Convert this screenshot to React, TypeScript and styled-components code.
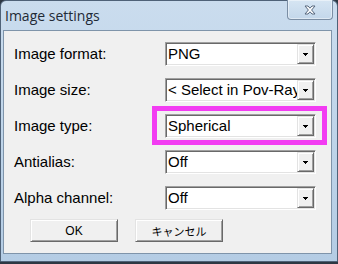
import React from 'react';
import styled, { createGlobalStyle } from 'styled-components';

type Setting = {
    label: string,
    value: string,
    highlighted?: boolean,
}

const settings: Setting[] = [
    { label: 'Image format:', value: 'PNG' },
    { label: 'Image size:', value: '< Select in Pov-Ray >' },
    { label: 'Image type:', value: 'Spherical', highlighted: true },
    { label: 'Antialias:', value: 'Off' },
    { label: 'Alpha channel:', value: 'Off' },
];

const GlobalStyle = createGlobalStyle`
    html, body {
        margin: 0;
        padding: 0;
    }
    body {
        width: 338px;
        height: 264px;
        overflow: hidden;
        background: #2d3743;
        font-family: "Liberation Sans", Arial, sans-serif;
    }
`;

const Window = styled.div`
    box-sizing: border-box;
    width: 338px;
    height: 262px;
    border: 1px solid #4f6278;
    border-radius: 6px 6px 0 0;
    background: linear-gradient(180deg, #cadcee 0%, #bed4e9 55%, #b4cce4 100%);
    display: flex;
    flex-direction: column;
    padding: 0 5px 7px 2px;
`;

const TitleBar = styled.div`
    height: 29px;
    display: flex;
    align-items: flex-start;
    flex-shrink: 0;
`;

const Title = styled.div`
    padding-left: 2px;
    font-family: "Open Sans", "Noto Sans", sans-serif;
    font-size: 14px;
    line-height: 29px;
    color: #1f2a36;
`;

const CloseButton = styled.div`
    box-sizing: border-box;
    margin-left: auto;
    margin-right: -1px;
    margin-top: -1px;
    width: 46px;
    height: 20px;
    border: 1px solid #7b8ea4;
    border-top: none;
    border-radius: 0 0 4px 4px;
    background: linear-gradient(180deg, #d6e5f3 0%, #c3d7ea 100%);
    box-shadow: inset 0 0 0 1px rgba(255, 255, 255, 0.45);
    display: flex;
    align-items: center;
    justify-content: center;
`;

const Client = styled.div`
    flex: 1;
    border: 1px solid #7f94aa;
    background: #f0f0f0;
    display: flex;
    flex-direction: column;
    padding: 11px 0 0 10px;
`;

const Rows = styled.div`
    display: flex;
    flex-direction: column;
    gap: 12px;
`;

const Row = styled.div`
    display: flex;
    align-items: center;
    height: 24px;
`;

const Label = styled.div`
    width: 151px;
    font-size: 15px;
    line-height: 24px;
    color: #000;
`;

const ComboWrap = styled.div`
    position: relative;
`;

const Combo = styled.div`
    box-sizing: border-box;
    width: 151px;
    height: 24px;
    padding: 1px;
    border: 1px solid;
    border-color: #a0a0a0 #ffffff #ffffff #a0a0a0;
    box-shadow: inset 1px 1px 0 #696969, inset -1px -1px 0 #e3e3e3;
    background: #fff;
    display: flex;
`;

const ComboText = styled.div`
    flex: 1;
    min-width: 0;
    overflow: hidden;
    white-space: nowrap;
    padding-left: 1px;
    font-size: 15px;
    line-height: 20px;
    color: #000;
`;

const ArrowButton = styled.div`
    box-sizing: border-box;
    width: 17px;
    height: 20px;
    flex-shrink: 0;
    background: #f0f0f0;
    border: 1px solid;
    border-color: #e3e3e3 #696969 #696969 #e3e3e3;
    box-shadow: inset 1px 1px 0 #ffffff, inset -1px -1px 0 #a0a0a0;
    display: flex;
    align-items: center;
    justify-content: center;
`;

const Highlight = styled.div`
    position: absolute;
    top: -8px;
    left: -13px;
    right: -11px;
    bottom: -7px;
    border: 5px solid #f23cf2;
    pointer-events: none;
`;

const ButtonRow = styled.div`
    display: flex;
    gap: 17px;
    margin-top: 9px;
    padding-left: 16px;
`;

const Button = styled.div<{ $jp?: boolean }>`
    box-sizing: border-box;
    width: 88px;
    height: 23px;
    background: #f0f0f0;
    border: 1px solid;
    border-color: #e3e3e3 #696969 #696969 #e3e3e3;
    box-shadow: inset 1px 1px 0 #ffffff, inset -1px -1px 0 #a0a0a0;
    display: flex;
    align-items: center;
    justify-content: center;
    color: #000;
    font-family: ${p => p.$jp ? '"Noto Sans CJK JP", sans-serif' : '"Liberation Sans", Arial, sans-serif'};
    font-size: ${p => p.$jp ? '11px' : '12px'};
`;

function DownArrow() {
    return <svg width="5" height="3" viewBox="0 0 5 3" shapeRendering="crispEdges">
        <rect x="0" y="0" width="5" height="1" fill="#000" />
        <rect x="1" y="1" width="3" height="1" fill="#000" />
        <rect x="2" y="2" width="1" height="1" fill="#000" />
    </svg>;
}

function CloseGlyph() {
    return <svg width="12" height="10" viewBox="0 0 12 10">
        <path d="M1 1 L4 1 L6 3.2 L8 1 L11 1 L7.6 5 L11 9 L8 9 L6 6.8 L4 9 L1 9 L4.4 5 Z"
              fill="#ffffff" stroke="#56677d" strokeWidth="1" strokeLinejoin="round" />
    </svg>;
}

function SettingRow(props: { setting: Setting }) {
    const { label, value, highlighted } = props.setting;
    return <Row>
        <Label>{label}</Label>
        <ComboWrap>
            <Combo>
                <ComboText>{value}</ComboText>
                <ArrowButton><DownArrow /></ArrowButton>
            </Combo>
            {highlighted && <Highlight />}
        </ComboWrap>
    </Row>;
}

export default function App() {
    return <>
        <GlobalStyle />
        <Window>
            <TitleBar>
                <Title>Image settings</Title>
                <CloseButton><CloseGlyph /></CloseButton>
            </TitleBar>
            <Client>
                <Rows>
                    {settings.map(s => <SettingRow key={s.label} setting={s} />)}
                </Rows>
                <ButtonRow>
                    <Button>OK</Button>
                    <Button $jp>キャンセル</Button>
                </ButtonRow>
            </Client>
        </Window>
    </>;
}
